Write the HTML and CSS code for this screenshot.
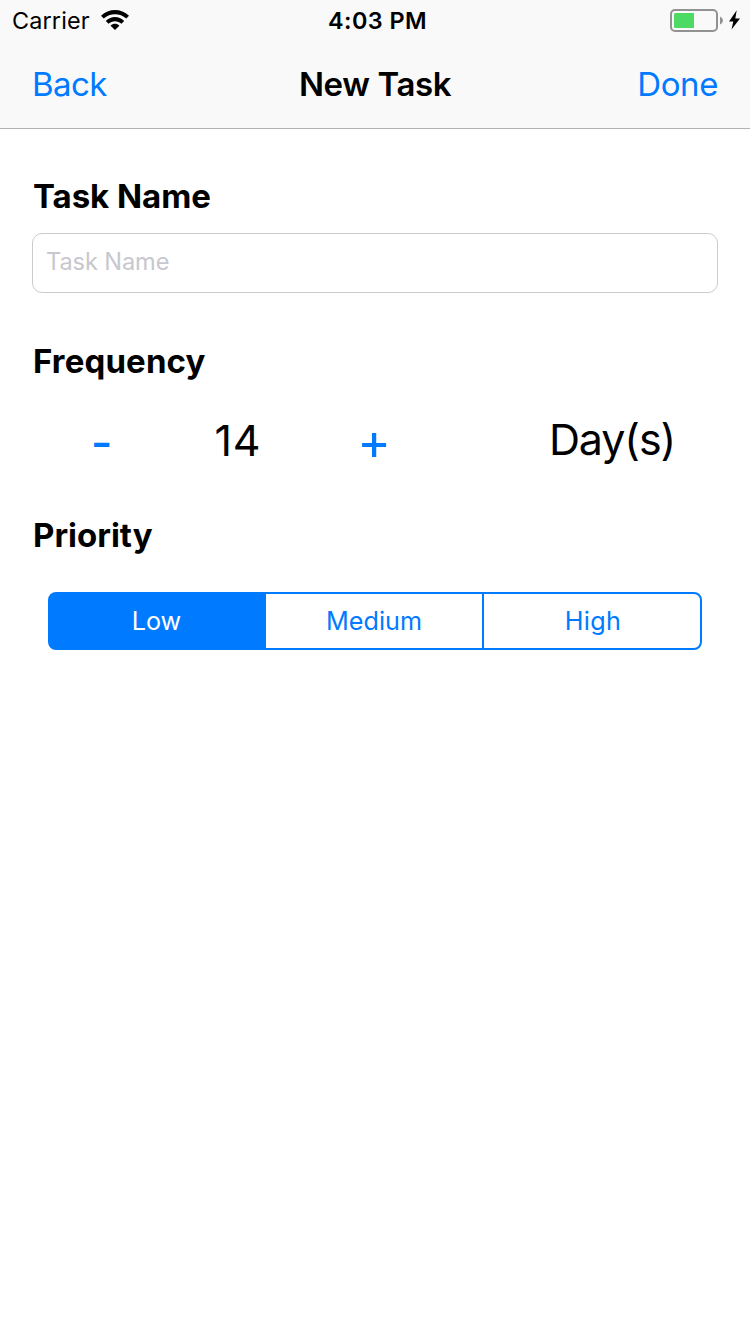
FILE: index.html
```html
<!DOCTYPE html>
<html lang="en">
<head>
<meta charset="utf-8">
<title>New Task</title>
<link rel="stylesheet" href="styles.css">
</head>
<body>
<header class="header">
  <div class="status">
    <div class="status-left">
      <span class="carrier">Carrier</span>
      <svg class="wifi" width="28" height="20" viewBox="0 0 28 20">
        <path d="M0 5.800C7.800-1.900 20.200-1.900 28 5.800L25.300 8.600C19 2.800 9 2.800 2.700 8.600Z"/>
        <path d="M4.800 11C10 5.600 18 5.600 23.200 11L20.500 13.700C16.800 10.300 11.200 10.300 7.500 13.700Z"/>
        <path d="M9.600 15.800C12.100 13.200 15.900 13.200 18.400 15.800L14 20Z"/>
      </svg>
    </div>
    <span class="clock">4:03 PM</span>
    <div class="status-right">
      <svg width="72" height="24" viewBox="0 0 72 24">
        <rect x="1" y="1" width="46" height="21" rx="4" fill="none" stroke="#929292" stroke-width="2"/>
        <path d="M5.500 4H24V19H5.500Q4 19 4 17.500V5.500Q4 4 5.500 4Z" fill="#4cd964"/>
        <path d="M50 7.500Q53 9 53 11.500T50 15.500Z" fill="#929292"/>
        <path d="M66.700 1.300L59 12.500H63.300L61.500 20.500L70 9.500H65.300Z"/>
      </svg>
    </div>
  </div>
  <nav class="nav">
    <a class="nav-link back">Back</a>
    <h1 class="nav-title">New Task</h1>
    <a class="nav-link done">Done</a>
  </nav>
</header>
<main class="form">
  <h2 class="label label-name">Task Name</h2>
  <div class="field"><span class="placeholder">Task Name</span></div>
  <h2 class="label label-frequency">Frequency</h2>
  <div class="frequency">
    <span class="step minus">-</span>
    <span class="count">14</span>
    <span class="step plus">+</span>
    <span class="unit">Day(s)</span>
  </div>
  <h2 class="label label-priority">Priority</h2>
  <div class="segments">
    <span class="segment selected">Low</span>
    <span class="segment">Medium</span>
    <span class="segment last">High</span>
  </div>
</main>
</body>
</html>
```
FILE: styles.css
```css
* { box-sizing: border-box; }

body {
  margin: 0;
  min-height: 1334px;
  background: #fff;
  color: #000;
  font-family: Inter, "Liberation Sans", sans-serif;
}

.header {
  height: 129px;
  background: #f9f9f9;
  border-bottom: 1px solid #b2b2b2;
}

.status {
  display: grid;
  grid-template-columns: 1fr auto 1fr;
  height: 40px;
  padding: 0 8px 0 12px;
  font-size: 23.4px;
  line-height: 41px;
}

.status-left { display: flex; align-items: flex-start; gap: 12px; }
.carrier { width: 77px; letter-spacing: 0.15px; white-space: nowrap; }
.wifi { margin-top: 10px; }
.clock { padding-left: 1px; font-weight: 600; letter-spacing: 0.45px; }
.status-right { display: flex; justify-content: flex-end; padding-top: 9px; }

.nav {
  display: grid;
  grid-template-columns: 1fr auto 1fr;
  height: 88px;
  padding: 0 32px;
  font-size: 33px;
  line-height: 88px;
}

.nav-link { color: #007aff; letter-spacing: -0.6px; }
.done { text-align: right; letter-spacing: -0.4px; }
.nav-title { margin: 0; font-size: 33px; font-weight: 600; letter-spacing: -0.4px; }

.form { padding: 43px 32px 0; }

.label {
  margin: 0;
  padding-left: 1px;
  font-size: 33px;
  font-weight: 700;
  line-height: 48px;
}

.label-name { letter-spacing: -0.05px; }
.label-frequency { letter-spacing: 0.15px; }

.field {
  height: 60px;
  margin: 13px 0 44px;
  padding: 0 13px;
  border: 1px solid #cbcbcd;
  border-radius: 10px;
  font-size: 23.6px;
  line-height: 55px;
  letter-spacing: -0.1px;
  color: #c7c7cd;
}

.frequency {
  display: grid;
  grid-template-columns: 138px 135px 138px 63px 1fr;
  height: 60px;
  margin: 26px 0 40px;
  font-size: 43px;
  line-height: 59px;
  text-align: center;
}

.count { padding-left: 1px; letter-spacing: 0.8px; }
.step { color: #007aff; font-size: 51px; line-height: 61px; }
.minus { padding-left: 1px; font-size: 47px; font-weight: 500; }
.plus { line-height: 62px; }
.unit {
  grid-column: 5;
  line-height: 57px;
  letter-spacing: -1.1px;
}

.segments {
  display: grid;
  grid-template-columns: 216px 216px 218px;
  height: 58px;
  margin: 33px 16px 0;
  border: 2px solid #007aff;
  border-radius: 8px;
  background: linear-gradient(#007aff, #007aff) border-box 0 0 / 40px 100% no-repeat;
  color: #007aff;
  font-size: 25.2px;
  line-height: 54px;
  text-align: center;
}

.selected {
  padding-right: 3px;
  border-radius: 6px 0 0 6px;
  background: #007aff;
  color: #fff;
}

.last { padding-left: 2px; border-left: 2px solid #007aff; letter-spacing: 0.3px; }
```
